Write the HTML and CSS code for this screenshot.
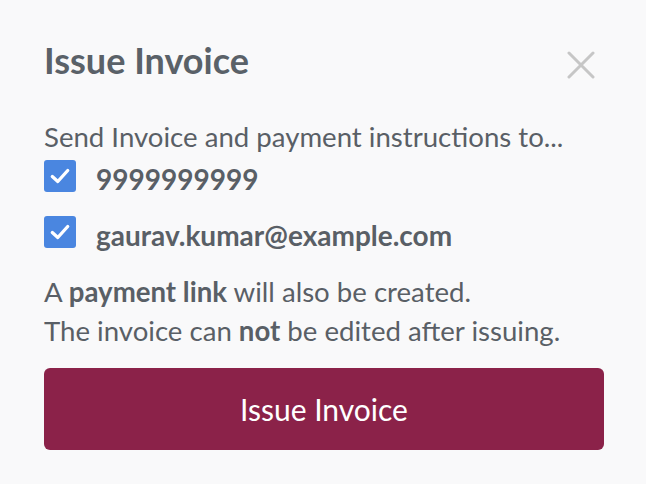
FILE: index.html
```html
<!DOCTYPE html>
<html>
<head>
<meta charset="utf-8">
<link rel="stylesheet" href="styles.css">
</head>
<body>
<div class="modal">
  <div class="header">
    <h1 class="title">Issue Invoice</h1>
    <button class="close" aria-label="Close">
      <svg width="28" height="28" viewBox="0 0 28 28"><path d="M2 2L26 26M26 2L2 26" stroke="#c6c6c6" stroke-width="3" stroke-linecap="round"/></svg>
    </button>
  </div>
  <p class="lead">Send Invoice and payment instructions to...</p>
  <label class="check">
    <span class="box"><svg width="22" height="22" viewBox="0 0 20 20"><path d="M3 10.5L8 15L17 5" fill="none" stroke="#fff" stroke-width="3" stroke-linecap="round" stroke-linejoin="round"/></svg></span>
    <span class="check-text">9999999999</span>
  </label>
  <label class="check">
    <span class="box"><svg width="22" height="22" viewBox="0 0 20 20"><path d="M3 10.5L8 15L17 5" fill="none" stroke="#fff" stroke-width="3" stroke-linecap="round" stroke-linejoin="round"/></svg></span>
    <span class="check-text">gaurav.kumar@example.com</span>
  </label>
  <p class="note">A <b>payment link</b> will also be created.<br>The invoice can <b>not</b> be edited after issuing.</p>
  <button class="primary">Issue Invoice</button>
</div>
</body>
</html>
```
FILE: styles.css
```css
html, body {
  margin: 0;
  padding: 0;
  background: #f9f9fa;
}
body {
  font-family: Lato, "Open Sans", sans-serif;
  color: #595f66;
}
.modal {
  padding: 38px 42px 0 44px;
}
.header {
  display: flex;
  justify-content: space-between;
  align-items: flex-start;
}
.title {
  margin: 0;
  font-size: 36px;
  font-weight: 700;
  line-height: 44px;
  color: #5a6168;
}
.close {
  background: none;
  border: 0;
  padding: 0;
  margin: 13px 9px 0 0;
  width: 28px;
  height: 28px;
  display: flex;
}
.lead {
  margin: 38px 0 0;
  font-size: 27.6px;
  line-height: 34px;
}
.check {
  display: flex;
  align-items: flex-start;
  gap: 20px;
  margin-top: 6px;
}
.check + .check {
  margin-top: 18px;
}
.box {
  width: 32px;
  height: 32px;
  border-radius: 3px;
  background: #4a86e0;
  display: flex;
  align-items: center;
  justify-content: center;
}
.check-text {
  font-size: 28px;
  font-weight: 700;
  line-height: 38px;
}
.note {
  margin: 19px 0 0;
  font-size: 27.6px;
  line-height: 38.5px;
}
.note b {
  font-weight: 700;
}
.primary {
  display: block;
  margin-top: 18px;
  width: 560px;
  height: 82px;
  border: 0;
  border-radius: 6px;
  background: #8b2249;
  color: #fff;
  font-family: Lato, sans-serif;
  font-size: 30px;
}
```
